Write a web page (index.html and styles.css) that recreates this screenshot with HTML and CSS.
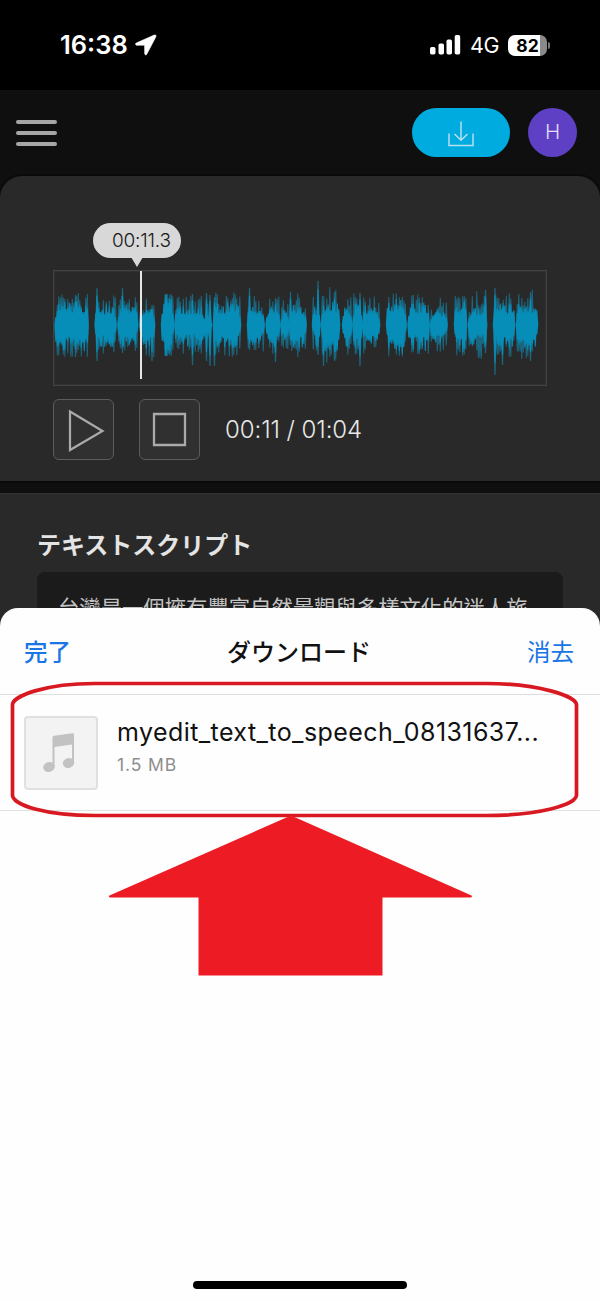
FILE: index.html
```
<!DOCTYPE html>
<html lang="ja">
<head>
<meta charset="utf-8">
<title>ダウンロード</title>
<link rel="stylesheet" href="styles.css">
</head>
<body>
<div class="phone">
  <div class="status">
    <div class="status-left">
      <span class="clock">16:38</span>
      <svg class="locate" width="22" height="22" viewBox="0 0 22 22"><path d="M19.200 1.100 1.300 9C.2 9.600.4 11.200 1.600 11.200h8l.1 8.400c0 1.600 1.600 1.700 2.200.4L20.900 2.700C21.500 1.300 20.500.5 19.200 1.100Z" fill="#fff" stroke="#fff" stroke-width=".6"/></svg>
    </div>
    <div class="status-right">
      <svg class="signal" width="31" height="20" viewBox="0 0 31 20" fill="#fff"><rect x="0" y="12" width="5.500" height="7.500" rx="1.700"/><rect x="8.500" y="8.500" width="5.500" height="11" rx="1.700"/><rect x="16.500" y="4.500" width="5.500" height="15" rx="1.700"/><rect x="24.700" y="0" width="5.500" height="19.500" rx="1.700"/></svg>
      <span class="network">4G</span>
      <span class="battery">82</span>
      <span class="battery-tip"></span>
    </div>
  </div>

  <header class="header">
    <div class="menu"><i></i><i></i><i></i></div>
    <div class="download">
      <svg width="26" height="26" viewBox="0 0 26 26" fill="none" stroke="#b8dff0" stroke-width="1.500"><path d="M1 12.500V24.500H25V12.500M13 .5V19M6.500 13 13 19.300 19.500 13"/></svg>
    </div>
    <div class="avatar">H</div>
  </header>

  <section class="player">
    <div class="tip">00:11.3</div>
    <div class="wave">
      <svg width="491" height="114" viewBox="54.500 271 491 114"><path id="wave-faint" fill="#1b667f"/><path id="wave-solid" fill="#068db8"/></svg>
      <span class="cursor"></span>
    </div>
    <div class="controls">
      <div class="control"><svg width="59" height="59" viewBox="0 0 59 59" fill="none" stroke="#aaa" stroke-width="2.200"><path d="M16 11.500V50L48.500 31Z"/></svg></div>
      <div class="control"><svg width="59" height="59" viewBox="0 0 59 59" fill="none" stroke="#aaa" stroke-width="2.300"><path d="M14 14H45V45H14Z"/></svg></div>
      <div class="elapsed">00:11 / 01:04</div>
    </div>
  </section>

  <section class="script">
    <h2 class="script-title">テキストスクリプト</h2>
    <div class="script-box" lang="zh-Hant">台灣是一個擁有豐富自然景觀與多樣文化的迷人旅</div>
  </section>

  <div class="sheet">
    <div class="sheet-bar">
      <span class="done">完了</span>
      <span class="sheet-title">ダウンロード</span>
      <span class="clear">消去</span>
    </div>
    <div class="file">
      <div class="thumb">
        <svg width="32" height="40" viewBox="0 0 32 40"><g fill="#c2c2c2"><path d="M9.500 4.500Q9.500 3 11 2.700L29.500.2Q31 0 31 1.500V30H29V11.500L11.500 14V34H9.500Z"/><ellipse cx="6" cy="34" rx="5.800" ry="5" transform="rotate(-15 6 34)"/><ellipse cx="25.500" cy="30" rx="5.700" ry="5" transform="rotate(-15 25.500 30)"/></g></svg>
      </div>
      <div class="file-info">
        <div class="file-name">myedit_text_to_speech_08131637...</div>
        <div class="file-size">1.5 MB</div>
      </div>
    </div>
    <div class="home-bar"></div>
  </div>

  <svg class="marks" width="600" height="320" viewBox="0 670 600 320">
    <path d="M12.500 705C12.500 696 45 683.500 95 683.500H486C538 683.500 576.500 696 576.500 705V795C576.500 805 538 815.500 486 815.500H95C45 815.500 12.500 805 12.500 795Z" fill="none" stroke="#d91922" stroke-width="3.700"/>
    <path d="M291 815.500 471.500 895.500Q472.500 897 471 897.500H382.500V975.500H198.500V897.500H110Q108 897 109.500 895.500Z" fill="#ed1c24"/>
  </svg>
</div>
<script src="wave.js"></script>
</body>
</html>
```
FILE: styles.css
```
* { box-sizing: border-box; }
body { margin: 0; background: #000; font-family: Inter, "Noto Sans CJK JP", sans-serif; }
.phone { position: relative; width: 600px; height: 1301px; overflow: hidden; background: #0f0f0f; }

.status { height: 90px; background: #000; color: #fff; display: flex; justify-content: space-between; padding: 34px 50px 0 60px; }
.status-left, .status-right { display: flex; height: 22px; align-items: center; }
.clock { font-size: 25.500px; font-weight: 600; letter-spacing: 0; margin-top: -1px; }
.locate { margin-left: 7px; }
.network { font-size: 21.500px; margin: 0 9px; width: 29px; letter-spacing: -0.300px; }
.battery { width: 39px; height: 21px; border-radius: 7px; background: linear-gradient(90deg, #fff 32px, #8a8a8a 32px); color: #000; font-size: 17.500px; font-weight: 700; line-height: 21px; text-align: center; }
.battery-tip { width: 2px; height: 7px; margin-left: 1px; border-radius: 0 2px 2px 0; background: #777; }

.header { height: 86px; display: flex; align-items: center; padding: 0 23px 1px 16px; background: #0f0f0f; }
.menu { display: flex; flex-direction: column; gap: 7px; margin-right: auto; }
.menu i { width: 41px; height: 4px; border-radius: 2px; background: #a6a6a6; }
.download { width: 98px; height: 49px; border-radius: 25px; background: #00abe0; display: flex; align-items: center; justify-content: center; padding-top: 2px; }
.avatar { width: 49px; height: 49px; margin-left: 18px; border-radius: 50%; background: #5d40c4; color: #e4def8; font-size: 20.500px; font-weight: 300; line-height: 48px; text-align: center; }

.player { height: 305px; padding: 47px 53px 0; background: #292929; border-radius: 22px 22px 0 0; box-shadow: 0 0 0 2px #0a0a0a; }
.tip { position: relative; width: 88px; height: 35px; margin-left: 40px; border-radius: 18px; background: #d8d8d8; color: #171717; font-size: 19px; font-weight: 300; letter-spacing: -0.200px; line-height: 35px; padding-left: 19px; white-space: nowrap; }
.tip::after { content: ""; position: absolute; left: 38px; top: 34px; border: 6px solid transparent; border-top: 10px solid #d8d8d8; border-bottom: 0; }
.wave { position: relative; width: 494px; height: 116px; margin-top: 12px; border: 1px solid #424242; box-shadow: inset 0 0 0 1px #323232; }
.wave svg { display: block; }
.cursor { position: absolute; left: 86px; top: 0; width: 2px; height: 108px; background: #e6e6e6; }
.controls { display: flex; align-items: center; margin-top: 13px; }
.control { width: 61px; height: 61px; margin-right: 25px; border: 1px solid #5c5c5c; border-radius: 6px; background: #303030; }
.control svg { display: block; }
.elapsed { color: #e8e8e8; font-size: 24px; font-weight: 300; letter-spacing: -0.080px; white-space: nowrap; }

.script { height: 820px; margin-top: 12px; padding: 35px 37px 0; background: #292929; border-top: 1px solid #333; }
.script-title { margin: 0; color: #e4e4e4; font-size: 24px; line-height: 34px; font-weight: 700; }
.script-box { height: 200px; margin-top: 9px; padding: 20px 21px 0; border-radius: 8px; background: #1b1b1b; color: #c4c4c4; font-family: "Noto Sans CJK TC", sans-serif; font-size: 21.350px; line-height: 30px; white-space: nowrap; }

.sheet { position: absolute; left: 0; top: 608px; width: 600px; height: 693px; border-radius: 18px 18px 0 0; background: #fefefe; }
.sheet-bar { height: 87px; padding: 0 26px 1px 24px; display: flex; justify-content: space-between; align-items: center; border-bottom: 1px solid #ddd; font-size: 23.500px; color: #1a75e5; }
.done { font-weight: 500; }
.sheet-title { color: #111; font-size: 24px; font-weight: 500; }
.file { height: 116px; display: flex; padding: 21px 24px 0; border-bottom: 1px solid #e2e2e2; }
.thumb { width: 74px; height: 74px; border: 2px solid #e0e0e0; border-radius: 4px; background: #f3f3f3; padding: 15px 0 0 17px; }
.thumb svg { display: block; }
.file-info { margin-left: 19px; }
.file-name { color: #111; font-size: 25px; line-height: 32px; letter-spacing: 0.420px; white-space: nowrap; }
.file-size { color: #8e8e8e; font-size: 17.500px; line-height: 22px; margin-top: 6px; letter-spacing: 0.900px; }
.home-bar { position: absolute; left: 193px; bottom: 12px; width: 214px; height: 8px; border-radius: 4px; background: #000; }
.marks { position: absolute; left: 0; top: 670px; }
```
FILE: wave.js
```
// Speech segments: start x, end x, body half-height, peak half-height
const segments = [
  [55.5,89,16,33],[95.5,116,14,30],[118.5,138,14,29],[140,155,14,32],
  [162,173.5,21,31],[175.5,205,13,30],[206,212,11,30],[214,241,15,33],
  [248,264,14,30],[266.5,280,13,29],[281.5,288.5,12,25],[290,306.5,15,33],
  [313,320.5,13,30],[322,340.5,17,38],[343,351.5,16,31],[353.5,362,15,33],
  [363.5,380,14,30],[387,406,18,32],[408.5,430,16,31],[431,448,11,28],
  [455,467.5,17,31],[469,487.5,13,34],[494,515,15,32],[517,538,16,36]
];
// Isolated peaks: x, height above, height below
const peaks = [
  [76,30,32],[97.5,37,36],[123,37,28],[152.5,20,36],[193,31,40],[207,32,36],
  [210.5,30,41],[215,28,41],[250,37,25],[276,26,37],[291,33,20],[318.5,44,30],
  [324,24,41],[335,33,36],[360.5,32,41],[486,35,28],[495.5,37,50],[503,22,40],[531,33,36]
];
let seed = 7;
const rnd = () => (seed = (seed * 16807) % 2147483647) / 2147483647;
const mid = 325;
const spike = (x, up, down, w) =>
  `M${x - w} ${mid}L${x - w / 3} ${mid - up}H${x + w / 3}L${x + w} ${mid}L${x + w / 3} ${mid + down}H${x - w / 3}Z`;
let solid = "", faint = "";
for (const [a, b, body, max] of segments) {
  for (let x = a + 0.8; x < b; x += 1.5) {
    const edge = Math.min(1, 0.5 + Math.min(x - a, b - x) / 5);
    const up = body * edge * (0.75 + rnd() * 0.75);
    const down = body * edge * (0.75 + rnd() * 0.9);
    solid += spike(x, up, down, 1.5);
    if (rnd() > 0.3) faint += spike(x, up + (max - up) * rnd(), down + (max - down) * rnd(), 1.5);
  }
}
for (const [x, up, down] of peaks) {
  faint += spike(x, up, down, 1.8);
  solid += spike(x, up * 0.8, down * 0.75, 1.6);
}
document.getElementById("wave-faint").setAttribute("d", faint);
document.getElementById("wave-solid").setAttribute("d", solid);
```
